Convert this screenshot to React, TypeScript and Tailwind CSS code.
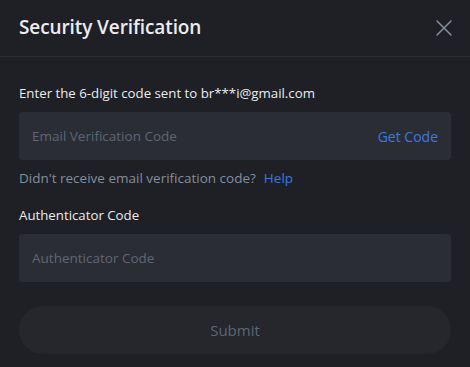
import React from "react";

export default function App() {
  return (
    <div
      className="w-[470px] h-[367px] bg-[#1e2026] overflow-hidden"
      style={{ fontFamily: '"Open Sans", "Noto Sans", sans-serif' }}
    >
      <div className="h-[57px] flex items-center justify-between pl-[19px] pr-[16px] border-b border-[#2b2d33]">
        <h1 className="text-[19px] font-semibold text-[#eaecef] tracking-[-0.1px] mt-[-2px]">Security Verification</h1>
        <button className="w-[20px] h-[20px] flex items-center justify-center text-[#848e9c]">
          <svg width="18" height="18" viewBox="0 0 18 18" fill="none" stroke="currentColor" strokeWidth="1.5" strokeLinecap="round">
            <path d="M2 2L16 16M16 2L2 16" />
          </svg>
        </button>
      </div>
      <div className="px-[19px] pt-[26px]">
        <div className="text-[13.25px] font-medium text-[#eaecef] leading-[20px]">Enter the 6-digit code sent to br***i@gmail.com</div>
        <div className="mt-[9px] h-[48px] rounded-[4px] bg-[#2b2d35] flex items-center justify-between pl-[13px] pr-[13px]">
          <span className="text-[13.5px] text-[#5e6673]">Email Verification Code</span>
          <span className="text-[14px] text-[#3a78e0]">Get Code</span>
        </div>
        <div className="mt-[8px] text-[13.5px] leading-[20px] text-[#848e9c]">
          Didn't receive email verification code?<span className="ml-[8px] text-[#3a78e0]">Help</span>
        </div>
        <div className="mt-[17px] text-[13.25px] font-medium text-[#eaecef] leading-[20px]">Authenticator Code</div>
        <div className="mt-[9px] h-[48px] rounded-[4px] bg-[#2b2d35] flex items-center pl-[13px]">
          <span className="text-[13.5px] text-[#5e6673]">Authenticator Code</span>
        </div>
        <div className="mt-[24px] h-[48px] rounded-full bg-[#25272c] flex items-center justify-center">
          <span className="text-[15px] text-[#5e6673]">Submit</span>
        </div>
      </div>
    </div>
  );
}
